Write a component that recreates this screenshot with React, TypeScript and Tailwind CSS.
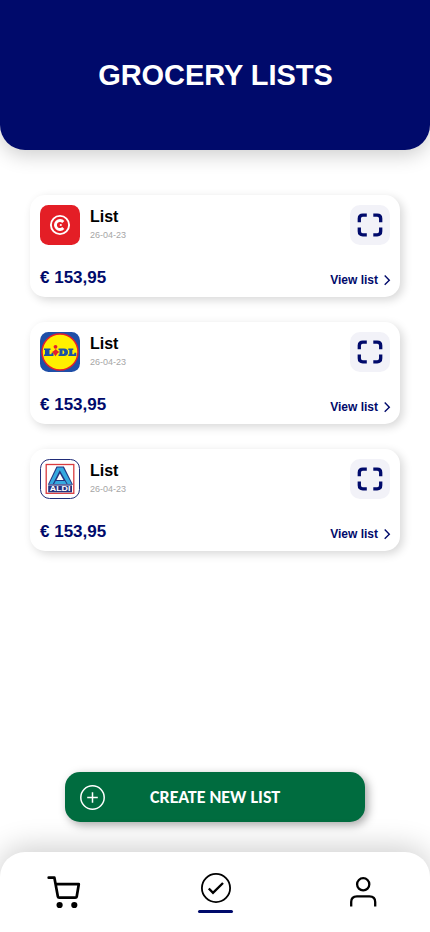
import React from 'react';

function RedLogo() {
  return (
    <svg viewBox="0 0 40 40" className="size-10">
      <rect width="40" height="40" rx="8.5" fill="#e41e26" />
      <circle cx="20" cy="20" r="9.1" fill="none" stroke="#fff" strokeWidth="1.9" />
      <path d="M23.3 17A4.5 4.5 0 1 0 23.3 23" fill="none" stroke="#fff" strokeWidth="2.9" />
      <circle cx="20.8" cy="20" r="1.1" fill="#fff" />
    </svg>
  );
}

function LidlLogo() {
  return (
    <svg viewBox="0 0 40 40" className="size-10">
      <rect width="40" height="40" rx="8.5" fill="#1f4fa8" />
      <circle cx="20" cy="20" r="18" fill="#fff000" stroke="#e51f2b" strokeWidth="1.5" />
      <g fill="#1c50a5">
        <path d="M4 16.5h6.5V18h-1v4.3h2v-1.6h2V24H4v-1.5h1V18H4z" />
        <path fillRule="evenodd" d="M18.5 16.5H24q4 0 4 3.75T24 24h-5.5v-1.5h1V18h-1zM22.5 18.2v4q1.9 0 1.9-2t-1.9-2z" />
        <path d="M28.3 16.5h5V18h-1v4.3h2v-1.6h2V24h-8v-1.5h1V18h-1z" />
      </g>
      <circle cx="15.5" cy="14.8" r="1.9" fill="#e51f2b" />
      <path d="M15.8 17l1.4 1.5 2 1.5-2 1.7-1.7 2.6-1.8-2.6-1.7-1.7 2-1.2z" fill="#e51f2b" />
    </svg>
  );
}

function AldiLogo() {
  return (
    <svg viewBox="0 0 40 40" className="size-10">
      <rect x=".5" y=".5" width="39" height="39" rx="9" fill="#fff" stroke="#202c78" />
      <rect x="6.2" y="5.5" width="27.6" height="28.8" fill="#fff" stroke="#d93b3e" strokeWidth="1.3" />
      <path d="M16.5 7.5h7.4L33 25.8H7.8z" fill="#24347f" />
      <path d="M17.3 8.4h5.7L31.6 25h-4L19.8 11.2 12.8 25H9.2z" fill="#35a9df" />
      <path d="M19.9 14.4 23.5 21h-7z" fill="#fff" />
      <path d="M15.7 22h9.2l1.6 3H14.1z" fill="#35a9df" />
      <rect x="8.2" y="26.4" width="23.8" height="6.9" fill="#24347f" />
      <text x="20.1" y="32.4" textAnchor="middle" fill="#fff" fontSize="7.5" fontWeight="700" textLength="20.5" lengthAdjust="spacingAndGlyphs" fontFamily="Liberation Sans, sans-serif">ALDI</text>
    </svg>
  );
}

function Card({ logo }: { logo: React.ReactNode }) {
  return (
    <article className="flex h-[102px] flex-col justify-between rounded-[15px] bg-white p-2.5 shadow-[3px_3px_10px_rgba(0,0,0,0.16)]">
      <div className="flex">
        {logo}
        <div className="ml-2.5 flex-1">
          <h2 className="mt-[3px] text-base leading-[18px] font-bold">List</h2>
          <p className="mt-1 text-[9px] leading-[10px] text-[#a6a6a6]">26-04-23</p>
        </div>
        <button aria-label="Expand" className="flex size-10 items-center justify-center rounded-[10px] bg-[#f2f2f8]">
          <svg viewBox="0 0 26 24" className="h-6 w-[26px]" fill="none" stroke="#000a6b" strokeWidth="3.3">
            <path d="M9.8 2.2H5.8Q2.3 2.2 2.3 5.5V9.3M16.3 2.2h3.9q3.5 0 3.5 3.3V9.3M2.3 14.5v3.8q0 3.5 3.5 3.5h4M23.7 14.5v3.8q0 3.5-3.5 3.5h-3.9" />
          </svg>
        </button>
      </div>
      <div className="flex items-end justify-between font-bold text-[#000a6b]">
        <span className="text-[17px] leading-[19px]">€ 153,95</span>
        <a className="flex h-[14px] items-center gap-1.5 text-xs leading-[14px]">
          View list
          <svg viewBox="0 0 6 12" className="h-3 w-1.5 overflow-visible" fill="none" stroke="currentColor" strokeWidth="1.4"><path d="M.7 1.5 5.3 6.2.7 10.8" /></svg>
        </a>
      </div>
    </article>
  );
}

export default function App() {
  return (
    <div className="flex h-[932px] w-[430px] flex-col overflow-hidden bg-white font-['Liberation_Sans',Arial,sans-serif] text-black">
      <header className="flex h-[150px] shrink-0 items-center justify-center rounded-b-[25px] bg-[#000a6b] pl-px shadow-[0_5px_20px_rgba(0,0,0,0.2)]">
        <h1 className="text-[29px] leading-[34px] font-bold tracking-[-0.05px] text-white">GROCERY LISTS</h1>
      </header>
      <main className="flex flex-1 flex-col">
        <section className="mx-[30px] mt-[45px] flex flex-col gap-[25px]">
          <Card logo={<RedLogo />} />
          <Card logo={<LidlLogo />} />
          <Card logo={<AldiLogo />} />
        </section>
        <button className="mx-auto mt-auto mb-[30px] flex h-[50px] w-[300px] items-center rounded-[15px] bg-[#006c3f] pl-[15px] text-white shadow-[3px_3px_10px_rgba(0,0,0,0.35)]">
          <svg viewBox="0 0 25 25" className="size-[25px]" fill="none" stroke="currentColor" strokeWidth="1.5"><circle cx="12.5" cy="12.5" r="11.7" /><path d="M12.5 7.2v10.6M7.2 12.5h10.6" /></svg>
          <span className="ml-[45px] font-[Carlito,Calibri,'Open_Sans',sans-serif] text-[18px] leading-5 font-bold whitespace-nowrap">CREATE NEW LIST</span>
        </button>
      </main>
      <nav className="flex h-20 shrink-0 items-start justify-between rounded-t-[25px] bg-white pr-[53px] pl-[46px] shadow-[0_-4px_30px_rgba(0,0,0,0.2)]">
        <svg viewBox="0 0 35 35" className="mt-[23px] size-[35px]" fill="none" stroke="currentColor" strokeWidth="2.7" strokeLinecap="round" strokeLinejoin="round">
          <path d="M2.7 2.7h5.7l3.5 19q.2 1 1.4 1h16q1.2 0 1.4-1L32.8 9.2H9.7" />
          <circle cx="13.6" cy="30" r="3.1" fill="currentColor" stroke="none" /><circle cx="28.3" cy="30" r="3.1" fill="currentColor" stroke="none" />
        </svg>
        <div className="mt-[21px] flex w-[35px] flex-col items-center">
          <svg viewBox="0 0 30 30" className="size-[30px]" fill="none" stroke="currentColor"><circle cx="15" cy="15" r="14.1" strokeWidth="1.8" /><path d="m7.8 15.5 4.2 4.3L22 10" strokeWidth="2.4" /></svg>
          <div className="mt-[7px] h-[3px] w-[35px] rounded-full bg-[#000a6b]" />
        </div>
        <svg viewBox="0 0 27 30" className="mt-[25px] h-[30px] w-[27px]" fill="none" stroke="currentColor" strokeWidth="2.3">
          <circle cx="13.2" cy="7.3" r="6.1" /><path d="M1.2 29.5V25q0-5.7 5.7-5.7h12.6q5.7 0 5.7 5.7v4.5" />
        </svg>
      </nav>
    </div>
  );
}
